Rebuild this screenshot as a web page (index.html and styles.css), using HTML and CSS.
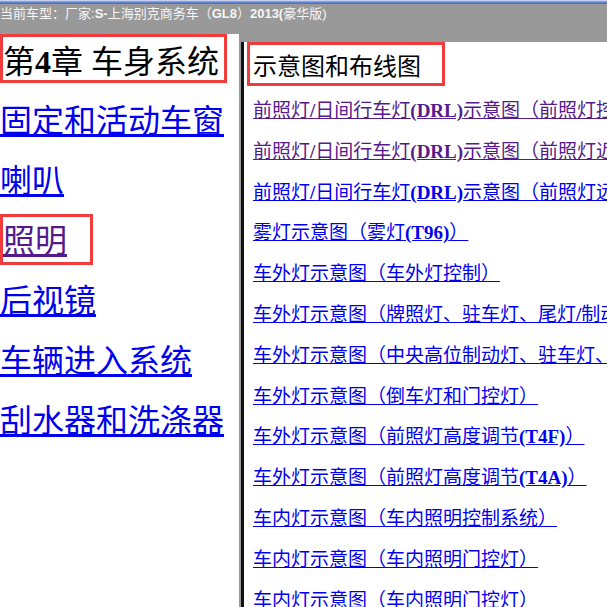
FILE: index.html
```html
<!DOCTYPE html>
<html lang="zh-CN">
<head>
<meta charset="utf-8">
<title>车身系统</title>
<link rel="stylesheet" href="styles.css">
</head>
<body>
<div class="top-stripe"></div>
<div class="titlebar">当前车型：厂家:<b>S-</b>上海别克商务车（<b>GL8</b>）<b>2013(</b>豪华版)</div>
<div class="frames">
  <div class="left">
    <h1 class="chapter"><span class="hl-box chapter-box">第<b>4</b>章 车身系统</span></h1>
    <ul class="toc">
      <li><a href="#">固定和活动车窗</a></li>
      <li><a href="#">喇叭</a></li>
      <li><span class="hl-box toc-box"><a href="#" class="visited">照明</a></span></li>
      <li><a href="#">后视镜</a></li>
      <li><a href="#">车辆进入系统</a></li>
      <li><a href="#">刮水器和洗涤器</a></li>
    </ul>
  </div>
  <div class="right">
    <h2 class="section"><span class="hl-box section-box">示意图和布线图</span></h2>
    <ul class="links">
      <li><a href="#" class="visited">前照灯<b>/</b>日间行车灯<b>(DRL)</b>示意图（前照灯控制）</a></li>
      <li><a href="#" class="visited">前照灯<b>/</b>日间行车灯<b>(DRL)</b>示意图（前照灯近光）</a></li>
      <li><a href="#">前照灯<b>/</b>日间行车灯<b>(DRL)</b>示意图（前照灯远光）</a></li>
      <li><a href="#">雾灯示意图（雾灯<b>(T96)</b>）</a></li>
      <li><a href="#">车外灯示意图（车外灯控制）</a></li>
      <li><a href="#">车外灯示意图（牌照灯、驻车灯、尾灯<b>/</b>制动灯）</a></li>
      <li><a href="#">车外灯示意图（中央高位制动灯、驻车灯、尾灯）</a></li>
      <li><a href="#">车外灯示意图（倒车灯和门控灯）</a></li>
      <li><a href="#">车外灯示意图（前照灯高度调节<b>(T4F)</b>）</a></li>
      <li><a href="#">车外灯示意图（前照灯高度调节<b>(T4A)</b>）</a></li>
      <li><a href="#">车内灯示意图（车内照明控制系统）</a></li>
      <li><a href="#">车内灯示意图（车内照明门控灯）</a></li>
      <li><a href="#">车内灯示意图（车内照明门控灯）</a></li>
    </ul>
  </div>
</div>
</body>
</html>
```
FILE: styles.css
```css
html, body {
  margin: 0;
  padding: 0;
  height: 100%;
}
body {
  background: #999999;
  overflow: hidden;
  font-family: "Liberation Serif", "Noto Sans CJK SC", serif;
}
.top-stripe {
  height: 4px;
  background: linear-gradient(to bottom, #e4ecfa 0%, #8aa4e0 35%, #5a78cc 70%, #4a68c0 100%);
}
.titlebar {
  height: 30px;
  box-sizing: border-box;
  padding-top: 2px;
  color: #f6f6f6;
  font-family: "Liberation Sans", "Noto Sans CJK SC", sans-serif;
  font-size: 13px;
  line-height: 16px;
  white-space: nowrap;
}
.titlebar b {
  font-weight: bold;
}
.frames {
  display: flex;
  height: calc(100% - 34px);
}
.left {
  width: 239px;
  flex: none;
  background: #ffffff;
  overflow: hidden;
}
.hl-box {
  display: inline-block;
  border: 3px solid #f03c3c;
}
.chapter {
  margin: 0;
  font-size: 32px;
  font-weight: normal;
  color: #000000;
  white-space: nowrap;
}
.chapter b {
  font-weight: bold;
}
.chapter-box {
  line-height: 35px;
  padding: 8px 5px 0 0;
}
.toc {
  list-style: none;
  margin: 6px 0 0;
  padding: 0;
}
.toc li {
  height: 60px;
  display: flex;
  align-items: center;
  white-space: nowrap;
}
.toc a {
  display: inline-block;
  font-size: 32px;
  line-height: 41px;
  padding-top: 4px;
  color: #0000ee;
  text-decoration: underline;
}
.toc-box {
  display: inline-flex;
  padding-right: 23px;
}
a.visited {
  color: #551a8b;
}
.right {
  flex: 1;
  margin: 8px 0 0 2px;
  border-left: 3px solid #111111;
  background: #ffffff;
  overflow: hidden;
  white-space: nowrap;
}
.section {
  margin: 0 0 0 3px;
  font-size: 24px;
  font-weight: normal;
  color: #000000;
}
.section-box {
  line-height: 32px;
  padding: 6px 21px 0 3px;
}
.links {
  list-style: none;
  margin: 5px 0 0;
  padding: 0 0 0 9px;
}
.links li {
  height: 40.8px;
  line-height: 40.8px;
}
.links a {
  font-size: 19px;
  color: #0000ee;
  text-decoration: underline;
}
.links a.visited {
  color: #551a8b;
}
.links b {
  font-weight: bold;
}
```
